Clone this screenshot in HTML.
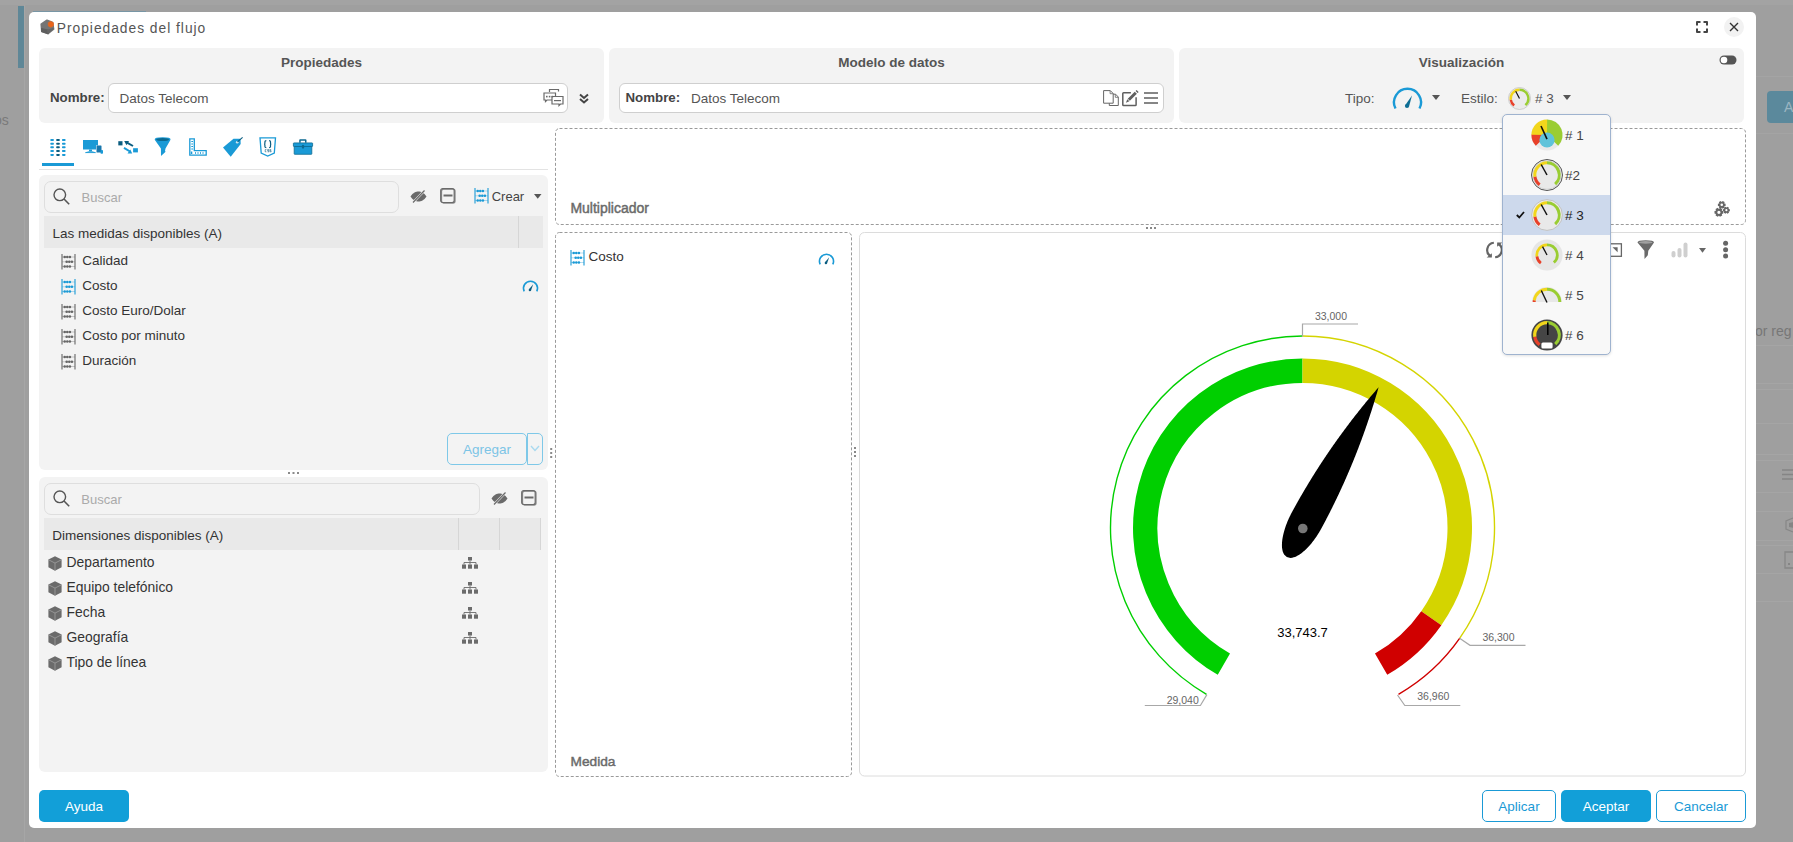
<!DOCTYPE html>
<html><head><meta charset="utf-8">
<style>
*{box-sizing:border-box;margin:0;padding:0}
html,body{width:1793px;height:842px;overflow:hidden;background:#9f9f9f;font-family:"Liberation Sans",sans-serif;font-size:13.5px;color:#333}
.a{position:absolute}
.t{position:absolute;white-space:nowrap;line-height:1}
.dlg{position:absolute;left:29px;top:12px;width:1727px;height:816px;background:#fff;border-radius:5px}
.pnl{position:absolute;background:#f3f3f3;border-radius:6px}
.inp{position:absolute;background:#fff;border:1px solid #cfcfcf;border-radius:6px}
.sbox{position:absolute;background:#f3f3f3;border:1px solid #dedede;border-radius:7px}
.hdr{position:absolute;background:#e9e9e9}
.btn{position:absolute;border-radius:5px;text-align:center;font-size:13.5px}
svg{position:absolute;overflow:visible}
</style></head>
<body>
<!-- background app remnants -->
<div class="a" style="left:0;top:0;width:1793px;height:5px;background:#a3a3a3"></div>
<div class="a" style="left:18px;top:6px;width:6px;height:62px;background:#5f8797"></div>
<div class="a" style="left:24px;top:5px;width:1px;height:837px;background:#a6a6a6"></div>
<div class="t" style="left:-6px;top:113px;color:#7a7a7a;font-size:14px">os</div>
<div class="a" style="left:1767px;top:91px;width:40px;height:32px;background:#5b899c;border-radius:4px"></div>
<div class="t" style="left:1784px;top:100px;color:#9cb6c2;font-size:14px">A</div>
<div class="t" style="left:1755px;top:324px;color:#777;font-size:14px">or reg</div>

<div class="a" style="left:1756px;top:76px;width:37px;height:1px;background:#a4a4a4"></div>
<div class="a" style="left:1756px;top:133px;width:37px;height:1px;background:#a4a4a4"></div>
<div class="a" style="left:1756px;top:345px;width:37px;height:1px;background:#a5a5a5"></div>
<div class="a" style="left:1756px;top:383px;width:37px;height:1px;background:#a5a5a5"></div>
<div class="a" style="left:1756px;top:389px;width:37px;height:1px;background:#a5a5a5"></div>
<div class="a" style="left:1756px;top:423px;width:37px;height:1px;background:#a5a5a5"></div>
<div class="a" style="left:1756px;top:454px;width:37px;height:1px;background:#a5a5a5"></div>
<div class="a" style="left:1756px;top:460px;width:37px;height:1px;background:#a5a5a5"></div>
<div class="a" style="left:1756px;top:492px;width:37px;height:1px;background:#a5a5a5"></div>
<div class="a" style="left:1756px;top:511px;width:37px;height:1px;background:#a5a5a5"></div>
<div class="a" style="left:1756px;top:540px;width:37px;height:1px;background:#a5a5a5"></div>
<div class="a" style="left:1756px;top:545px;width:37px;height:1px;background:#a5a5a5"></div>
<div class="a" style="left:1756px;top:573px;width:37px;height:1px;background:#a5a5a5"></div>
<div class="a" style="left:1756px;top:601px;width:37px;height:1px;background:#a5a5a5"></div>
<svg style="left:1782px;top:469px" width="11" height="11" viewBox="0 0 11 11"><path d="M0 1H11M0 5.5H11M0 10H11" stroke="#858585" stroke-width="1.3"/></svg>
<svg style="left:1784px;top:517px" width="10" height="16" viewBox="0 0 10 16"><path d="M9 1L2 4V12L9 15" fill="none" stroke="#878787" stroke-width="1.2"/><path d="M5 6L10 5V11L5 10Z" fill="#858585"/></svg>
<svg style="left:1784px;top:551px" width="10" height="18" viewBox="0 0 10 18"><path d="M10 1H1V17H10" fill="none" stroke="#878787" stroke-width="1.3"/><rect x="4" y="12" width="2" height="2" fill="#858585"/></svg>
<div class="a" style="left:33px;top:11px;width:113px;height:1px;background:#7896a5"></div>
<div class="dlg"></div>

<!-- title -->
<svg style="left:40px;top:19px" width="15" height="16" viewBox="0 0 15 16">
 <path d="M7 1.2L12.6 3.6L13.6 10.2L8 14.6L1.8 12.4L1.2 5.2Z" fill="#757575" stroke="#757575" stroke-width="1.6" stroke-linejoin="round"/>
 <path d="M1.6 9.5L7.6 11L8 14.6L1.8 12.4Z" fill="#5f5f5f" stroke="#5f5f5f" stroke-width="1.2" stroke-linejoin="round"/>
 <path d="M7.6 11L13.4 9.6L8 14.6Z" fill="#666" stroke="#666" stroke-width="1" stroke-linejoin="round"/>
 <path d="M10.6 2.4L13.3 3.7L13.4 6.8L10.9 8.2L8.4 6.9L8.3 3.8Z" fill="#e8641b" stroke="#e8641b" stroke-width="0.8" stroke-linejoin="round"/>
</svg>
<div class="t" style="left:56.8px;top:22px;font-size:13.8px;letter-spacing:0.98px;color:#555">Propiedades del flujo</div>


<!-- window controls -->
<svg style="left:1696px;top:21px" width="12" height="12" viewBox="0 0 12 12">
 <path d="M1 4.5V1H4.5M7.5 1H11V4.5M11 7.5V11H7.5M4.5 11H1V7.5" fill="none" stroke="#454545" stroke-width="2" stroke-linejoin="round"/>
</svg>
<div class="a" style="left:1724px;top:17px;width:20px;height:20px;border-radius:50%;background:#f2f2f2"></div>
<svg style="left:1730px;top:23px" width="8" height="8" viewBox="0 0 8 8">
 <path d="M0 0L8 8M8 0L0 8" stroke="#333" stroke-width="1.4"/>
</svg>

<!-- top panels -->
<div class="pnl" style="left:39px;top:48px;width:565px;height:75px"></div>
<div class="pnl" style="left:609px;top:48px;width:565px;height:75px"></div>
<div class="pnl" style="left:1179px;top:48px;width:565px;height:75px"></div>
<div class="t" style="left:39px;width:565px;text-align:center;top:55.6px;font-weight:bold;color:#555">Propiedades</div>
<div class="t" style="left:609px;width:565px;text-align:center;top:55.6px;font-weight:bold;color:#555">Modelo de datos</div>
<div class="t" style="left:1179px;width:565px;text-align:center;top:55.6px;font-weight:bold;color:#555">Visualización</div>

<div class="t" style="left:50px;top:90.7px;font-size:13.3px;font-weight:bold;color:#444">Nombre:</div>
<div class="inp" style="left:108px;top:83px;width:460px;height:30px"></div>
<div class="t" style="left:119.5px;top:91.6px;color:#555">Datos Telecom</div>
<svg style="left:543px;top:88px" width="21" height="19" viewBox="0 0 21 19">
 <g fill="none" stroke="#6a6a6a" stroke-width="1.2">
  <path d="M6.5 4V1.5H15.5V3.5"/>
  <path d="M1 5H12.5V12H4L2.5 13.5V12H1Z"/>
  <path d="M9 8.5H20V16H17.5L16 17.5V16H9Z" fill="#fff"/>
 </g>
 <g fill="#6a6a6a"><rect x="3" y="7.8" width="1.6" height="1.6"/><rect x="5.8" y="7.8" width="1.6" height="1.6"/><rect x="8.6" y="7.8" width="1.6" height="1.6"/><rect x="11" y="12" width="7" height="1.2"/></g>
</svg>
<svg style="left:579px;top:93px" width="10" height="11" viewBox="0 0 10 11">
 <path d="M1 1.5L5 5L9 1.5M1 6L5 9.5L9 6" fill="none" stroke="#444" stroke-width="2"/>
</svg>

<div class="inp" style="left:619px;top:83px;width:545px;height:30px"></div>
<div class="t" style="left:625.5px;top:90.5px;font-size:13.3px;font-weight:bold;color:#444">Nombre:</div>
<div class="t" style="left:691px;top:91.6px;color:#555">Datos Telecom</div>
<svg style="left:1103px;top:90px" width="17" height="17" viewBox="0 0 17 17">
 <path d="M6.3 4.2H12.6L15.3 7V15.5H6.3Z" fill="#fff" stroke="#666" stroke-width="1"/>
 <path d="M12.3 4.4V7.3H15.1" fill="none" stroke="#666" stroke-width="0.8"/>
 <path d="M0.6 0.6H7.3L10.2 3.5V13.2H0.6Z" fill="#fff" stroke="#666" stroke-width="1"/>
 <path d="M7.1 0.8V3.7H10" fill="none" stroke="#666" stroke-width="0.8"/>
</svg>
<svg style="left:1122px;top:89px" width="17" height="18" viewBox="0 0 17 18">
 <path d="M8.9 3.7H1.6Q0.8 3.7 0.8 4.5V15.8Q0.8 16.6 1.6 16.6H13.3Q14.1 16.6 14.1 15.8V8.2" fill="none" stroke="#5f5f5f" stroke-width="1.5"/>
 <path d="M5.74 9.74L12.74 2.74L14.86 4.86L7.86 11.86Z" fill="#5f5f5f"/>
 <path d="M5.3 10.2L7.4 12.3L3.9 13.7Z" fill="#5f5f5f"/>
 <path d="M13.54 1.94L14.54 0.94L16.66 3.06L15.66 4.06Z" fill="#5f5f5f"/>
</svg>
<svg style="left:1144px;top:91px" width="15" height="13" viewBox="0 0 15 13">
 <path d="M0 2H14M0 7H14M0 12H14" stroke="#5f5f5f" stroke-width="1.7"/>
</svg>

<!-- visualizacion -->
<svg style="left:1719px;top:55px" width="18" height="10" viewBox="0 0 18 10">
 <rect x="0.5" y="0.5" width="17" height="9" rx="4.5" fill="#555"/>
 <circle cx="5" cy="5" r="3.3" fill="#fff"/>
</svg>
<div class="t" style="left:1345px;top:91.6px;color:#555">Tipo:</div>
<svg style="left:1392px;top:85px" width="31" height="25" viewBox="0 0 31 25">
 <path d="M3.5 23.5A13.5 13.5 0 1 1 27.5 23.5" fill="none" stroke="#1a9ad6" stroke-width="2.4"/>
 <path d="M13 20.5L20 10.5L17 21.5Z" fill="#0e6e94"/>
 <circle cx="15" cy="21" r="2.1" fill="#0e6e94"/>
</svg>
<svg style="left:1432px;top:95px" width="8" height="6" viewBox="0 0 8 6"><path d="M0 0H8L4 5Z" fill="#555"/></svg>
<div class="t" style="left:1461px;top:91.6px;color:#555">Estilo:</div>
<svg style="left:1508px;top:87px" width="23" height="23" viewBox="-11.5 -11.5 23 23"><circle r="11" fill="#ebebeb" stroke="#c4c4c4" stroke-width="0.8"/><path d="M-5.30 7.03A8.8 8.8 0 0 1 -8.73 1.07" fill="none" stroke="#e8412a" stroke-width="2.4"/><path d="M-8.71 1.22A8.8 8.8 0 0 1 0.08 -8.80" fill="none" stroke="#f2d61c" stroke-width="2.4"/><path d="M0.00 -8.80A8.8 8.8 0 0 1 5.89 6.54" fill="none" stroke="#9acd32" stroke-width="2.4"/><path d="M0 0L-3.8 -7.3" stroke="#111" stroke-width="1.2"/></svg>
<div class="t" style="left:1535px;top:91.6px;color:#555">#&nbsp;3</div>
<svg style="left:1563px;top:95px" width="8" height="6" viewBox="0 0 8 6"><path d="M0 0H8L4 5Z" fill="#555"/></svg>


<!-- tabs -->
<svg style="left:50px;top:138px" width="16" height="18" viewBox="0 0 16 18">
 <g fill="#1a9ad6"><rect x="0.3" y="1" width="3.6" height="2" rx="0.8"/><rect x="0.3" y="4.7" width="3.6" height="2" rx="0.8"/><rect x="0.3" y="8.3" width="3.6" height="2" rx="0.8"/><rect x="0.3" y="12" width="3.6" height="2" rx="0.8"/><rect x="0.3" y="15.9" width="3.6" height="2" rx="0.8"/>
 <rect x="12" y="1" width="3.6" height="2" rx="0.8"/><rect x="12" y="4.7" width="3.6" height="2" rx="0.8"/><rect x="12" y="8.3" width="3.6" height="2" rx="0.8"/><rect x="12" y="12" width="3.6" height="2" rx="0.8"/><rect x="12" y="15.9" width="3.6" height="2" rx="0.8"/></g>
 <g fill="#0b5d80"><rect x="6.2" y="1" width="3.6" height="2" rx="0.8"/><rect x="6.2" y="4.7" width="3.6" height="2" rx="0.8"/><rect x="6.2" y="8.3" width="3.6" height="2" rx="0.8"/><rect x="6.2" y="12" width="3.6" height="2" rx="0.8"/><rect x="6.2" y="15.9" width="3.6" height="2" rx="0.8"/></g>
</svg>
<div class="a" style="left:42px;top:163px;width:32px;height:3px;background:#1a9ad6"></div>
<svg style="left:83px;top:140px" width="21" height="14" viewBox="0 0 21 14">
 <rect x="0" y="0" width="15" height="9.5" fill="#1a9ad6"/>
 <path d="M6 9.5H9V11H6Z" fill="#1a9ad6"/>
 <path d="M2.5 12.6Q7.5 10.5 12.5 12.6Z" fill="#1a9ad6" stroke="#1a9ad6" stroke-width="0.8"/>
 <rect x="13" y="5.4" width="5.3" height="7.2" fill="#fff"/>
 <rect x="13.5" y="5.4" width="5" height="7.2" rx="0.6" fill="#1777ad"/>
 <rect x="17.5" y="10" width="2.5" height="3.8" rx="0.8" fill="#1a9ad6"/>
</svg>
<svg style="left:118px;top:140px" width="21" height="15" viewBox="0 0 21 15">
 <rect x="0.3" y="1.2" width="4.2" height="4.2" fill="#0b5d80"/>
 <rect x="15.1" y="8.2" width="4.8" height="4.2" fill="#1a9ad6"/>
 <path d="M15 6L8.5 2.4" stroke="#0b5d80" stroke-width="2"/><path d="M6.2 1L11 0.9L8.5 5.2Z" fill="#0b5d80"/>
 <path d="M6 7.8L12 11.5" stroke="#1a9ad6" stroke-width="2"/><path d="M14.2 13.6L9.5 13.6L12.3 9.5Z" fill="#1a9ad6"/>
</svg>
<svg style="left:154px;top:137px" width="18" height="20" viewBox="0 0 18 20">
 <path d="M0.7 2.7Q0.3 0.3 8.7 0.3Q17 0.3 16.5 2.7L11.5 11.5L11 14L11.6 14.8L7 19L6.9 11.5Z" fill="#1a9ad6"/>
 <ellipse cx="8.6" cy="2.6" rx="6.5" ry="1.5" fill="#0d6a91"/>
</svg>
<svg style="left:189px;top:138px" width="18" height="18" viewBox="0 0 18 18">
 <path d="M0.8 0.8H5.3V12.6H17.2V17.2H0.8Z" fill="none" stroke="#1a9ad6" stroke-width="1.3"/>
 <g stroke="#1a9ad6" stroke-width="1"><path d="M2.3 3.5H4M2.3 6H4M2.3 8.5H4M2.3 11H4M6.5 14.2V15.8M9 14.2V15.8M11.5 14.2V15.8M14 14.2V15.8"/></g>
 <rect x="1.8" y="13.5" width="1.5" height="2.5" fill="#1a9ad6"/>
</svg>
<svg style="left:223px;top:137px" width="21" height="20" viewBox="0 0 21 20">
 <path d="M0 10.5L10.5 1.8H17.5L17.7 7L7.7 19.8Z" fill="#1a9ad6"/>
 <circle cx="14.2" cy="5.2" r="1.3" fill="#cfe6f1"/>
 <path d="M14.5 4.8L19.6 0.3" stroke="#0b5d80" stroke-width="1.1"/>
</svg>
<svg style="left:259px;top:137px" width="18" height="20" viewBox="0 0 18 20">
 <path d="M1 0.9H16.5L15.3 16L8.7 19L2.2 16Z" fill="#fff" stroke="#1a9ad6" stroke-width="1.3"/>
 <path d="M7.3 3.6Q5.9 3.6 5.9 4.8V6.2Q5.9 7 5.2 7.1Q5.9 7.2 5.9 8V9.4Q5.9 10.6 7.3 10.6" fill="none" stroke="#0b5d80" stroke-width="1.2"/>
 <path d="M10.1 3.6Q11.5 3.6 11.5 4.8V6.2Q11.5 7 12.2 7.1Q11.5 7.2 11.5 8V9.4Q11.5 10.6 10.1 10.6" fill="none" stroke="#0b5d80" stroke-width="1.2"/>
 <path d="M7.4 12.6H6.2V14.8H7.4M10.2 12.6H8.6V13.7H10V14.8H8.6M12.2 12.6H10.9V13.7H12.1V14.8H10.8" fill="none" stroke="#0b5d80" stroke-width="0.6"/>
</svg>
<svg style="left:293px;top:139px" width="20" height="16" viewBox="0 0 20 16">
 <path d="M6.2 3.8V1.2Q6.2 0.3 7.1 0.3H12.5Q13.5 0.3 13.5 1.2V3.8H12V1.8H7.7V3.8Z" fill="#0d6a91"/>
 <rect x="0.4" y="3.9" width="19.2" height="3.6" rx="0.5" fill="#1a9ad6" stroke="#0d6a91" stroke-width="0.8"/>
 <rect x="1.2" y="7.5" width="17.6" height="7.8" rx="0.5" fill="#1a9ad6" stroke="#0d6a91" stroke-width="0.8"/>
 <path d="M8.9 6.3Q10 5.1 11.1 6.3V8.8L10 9.9L8.9 8.8Z" fill="#0d6a91"/>
</svg>
<div class="a" style="left:39px;top:169px;width:509px;height:1px;background:#e3e3e3"></div>

<!-- measures panel -->
<div class="pnl" style="left:39px;top:175px;width:509px;height:295px;border-radius:6px"></div>
<div class="sbox" style="left:44px;top:181px;width:355px;height:32px"></div>
<svg style="left:53px;top:188px" width="17" height="17" viewBox="0 0 17 17">
 <circle cx="6.8" cy="6.8" r="5.8" fill="none" stroke="#555" stroke-width="1.4"/>
 <path d="M11 11L16.2 16.2" stroke="#555" stroke-width="1.6"/>
</svg>
<div class="t" style="left:81.5px;top:191px;font-size:13px;color:#aaa">Buscar</div>
<svg style="left:410px;top:189.5px" width="17" height="13" viewBox="0 0 17 13">
 <path d="M0.5 6.5C3 2.5 6 1.5 8.5 1.5C11 1.5 14 2.5 16.5 6.5C14 10.5 11 11.5 8.5 11.5C6 11.5 3 10.5 0.5 6.5Z" fill="#6a6a6a"/>
 <path d="M14.5 0.5L3 12.5" stroke="#f3f3f3" stroke-width="2.4"/>
 <path d="M14.5 0.5L3 12.5" stroke="#6a6a6a" stroke-width="1.2"/>
</svg>
<svg style="left:440px;top:188px" width="16" height="16" viewBox="0 0 16 16">
 <rect x="1.5" y="1.2" width="13.5" height="13.8" rx="2" fill="none" stroke="#8a8a8a" stroke-width="1.3"/>
 <rect x="0.7" y="0.7" width="13.5" height="13.8" rx="2" fill="none" stroke="#6a6a6a" stroke-width="1.2"/>
 <path d="M3.5 7.5H12.5" stroke="#6a6a6a" stroke-width="2"/>
</svg>
<svg style="left:474px;top:188px" width="15" height="16" viewBox="0 0 15 16">
 <path d="M1 0V15.5M14 0V15.5" stroke="#1a9ad6" stroke-width="1.1"/>
 <path d="M1 3H14M1 7.8H14M1 12.5H14" stroke="#1a9ad6" stroke-width="0.6" opacity="0.55"/>
 <g fill="#1a9ad6"><circle cx="3.7" cy="3" r="1.3"/><circle cx="6.3" cy="3" r="1.3"/><circle cx="8.9" cy="3" r="1.3"/>
 <circle cx="5.7" cy="7.8" r="1.3"/><circle cx="8.3" cy="7.8" r="1.3"/><circle cx="10.9" cy="7.8" r="1.3"/>
 <circle cx="3.7" cy="12.5" r="1.3"/><circle cx="6.3" cy="12.5" r="1.3"/><circle cx="8.9" cy="12.5" r="1.3"/></g>
</svg>
<div class="t" style="left:491.7px;top:190px;font-size:13px;color:#444">Crear</div>
<svg style="left:534px;top:194px" width="8" height="5" viewBox="0 0 8 5"><path d="M0 0H7.5L3.75 4.8Z" fill="#555"/></svg>
<div class="hdr" style="left:44px;top:216px;width:499px;height:32px"></div>
<div class="a" style="left:518px;top:216px;width:1px;height:32px;background:#d6d6d6"></div>
<div class="t" style="left:52.4px;top:226.8px;color:#333">Las medidas disponibles (A)</div>
<svg style="left:61px;top:254px" width="15" height="16" viewBox="0 0 15 16">
 <path d="M1 0V15.5M14 0V15.5" stroke="#666" stroke-width="1.1"/>
 <path d="M1 3H14M1 7.8H14M1 12.5H14" stroke="#666" stroke-width="0.6" opacity="0.55"/>
 <g fill="#666"><circle cx="3.7" cy="3" r="1.3"/><circle cx="6.3" cy="3" r="1.3"/><circle cx="8.9" cy="3" r="1.3"/>
 <circle cx="5.7" cy="7.8" r="1.3"/><circle cx="8.3" cy="7.8" r="1.3"/><circle cx="10.9" cy="7.8" r="1.3"/>
 <circle cx="3.7" cy="12.5" r="1.3"/><circle cx="6.3" cy="12.5" r="1.3"/><circle cx="8.9" cy="12.5" r="1.3"/></g>
</svg>
<div class="t" style="left:82.2px;top:254px">Calidad</div>
<svg style="left:61px;top:279px" width="15" height="16" viewBox="0 0 15 16">
 <path d="M1 0V15.5M14 0V15.5" stroke="#1a9ad6" stroke-width="1.1"/>
 <path d="M1 3H14M1 7.8H14M1 12.5H14" stroke="#1a9ad6" stroke-width="0.6" opacity="0.55"/>
 <g fill="#1a9ad6"><circle cx="3.7" cy="3" r="1.3"/><circle cx="6.3" cy="3" r="1.3"/><circle cx="8.9" cy="3" r="1.3"/>
 <circle cx="5.7" cy="7.8" r="1.3"/><circle cx="8.3" cy="7.8" r="1.3"/><circle cx="10.9" cy="7.8" r="1.3"/>
 <circle cx="3.7" cy="12.5" r="1.3"/><circle cx="6.3" cy="12.5" r="1.3"/><circle cx="8.9" cy="12.5" r="1.3"/></g>
</svg>
<div class="t" style="left:82.2px;top:279px">Costo</div>
<svg style="left:61px;top:304px" width="15" height="16" viewBox="0 0 15 16">
 <path d="M1 0V15.5M14 0V15.5" stroke="#666" stroke-width="1.1"/>
 <path d="M1 3H14M1 7.8H14M1 12.5H14" stroke="#666" stroke-width="0.6" opacity="0.55"/>
 <g fill="#666"><circle cx="3.7" cy="3" r="1.3"/><circle cx="6.3" cy="3" r="1.3"/><circle cx="8.9" cy="3" r="1.3"/>
 <circle cx="5.7" cy="7.8" r="1.3"/><circle cx="8.3" cy="7.8" r="1.3"/><circle cx="10.9" cy="7.8" r="1.3"/>
 <circle cx="3.7" cy="12.5" r="1.3"/><circle cx="6.3" cy="12.5" r="1.3"/><circle cx="8.9" cy="12.5" r="1.3"/></g>
</svg>
<div class="t" style="left:82.2px;top:304px">Costo Euro/Dolar</div>
<svg style="left:61px;top:329px" width="15" height="16" viewBox="0 0 15 16">
 <path d="M1 0V15.5M14 0V15.5" stroke="#666" stroke-width="1.1"/>
 <path d="M1 3H14M1 7.8H14M1 12.5H14" stroke="#666" stroke-width="0.6" opacity="0.55"/>
 <g fill="#666"><circle cx="3.7" cy="3" r="1.3"/><circle cx="6.3" cy="3" r="1.3"/><circle cx="8.9" cy="3" r="1.3"/>
 <circle cx="5.7" cy="7.8" r="1.3"/><circle cx="8.3" cy="7.8" r="1.3"/><circle cx="10.9" cy="7.8" r="1.3"/>
 <circle cx="3.7" cy="12.5" r="1.3"/><circle cx="6.3" cy="12.5" r="1.3"/><circle cx="8.9" cy="12.5" r="1.3"/></g>
</svg>
<div class="t" style="left:82.2px;top:329px">Costo por minuto</div>
<svg style="left:61px;top:354px" width="15" height="16" viewBox="0 0 15 16">
 <path d="M1 0V15.5M14 0V15.5" stroke="#666" stroke-width="1.1"/>
 <path d="M1 3H14M1 7.8H14M1 12.5H14" stroke="#666" stroke-width="0.6" opacity="0.55"/>
 <g fill="#666"><circle cx="3.7" cy="3" r="1.3"/><circle cx="6.3" cy="3" r="1.3"/><circle cx="8.9" cy="3" r="1.3"/>
 <circle cx="5.7" cy="7.8" r="1.3"/><circle cx="8.3" cy="7.8" r="1.3"/><circle cx="10.9" cy="7.8" r="1.3"/>
 <circle cx="3.7" cy="12.5" r="1.3"/><circle cx="6.3" cy="12.5" r="1.3"/><circle cx="8.9" cy="12.5" r="1.3"/></g>
</svg>
<div class="t" style="left:82.2px;top:354px">Duración</div>
<svg style="left:522px;top:279px" width="17" height="13" viewBox="0 0 17 13">
 <path d="M2.2 12.3A7 7 0 1 1 14.8 12.3" fill="none" stroke="#1a9ad6" stroke-width="1.6"/>
 <path d="M6.8 10.5L11.2 5.2L9 11.5Z" fill="#0b5d80"/><circle cx="7.9" cy="11" r="1.2" fill="#0b5d80"/>
</svg>
<div class="a" style="left:447px;top:433px;width:80px;height:32px;border:1.5px solid #7ec8e8;border-radius:5px"></div>
<div class="t" style="left:447px;width:80px;text-align:center;top:442.6px;color:#7cc4e6">Agregar</div>
<div class="a" style="left:527px;top:433px;width:16px;height:32px;border:1.5px solid #7ec8e8;border-radius:0 5px 5px 0"></div>
<svg style="left:530px;top:445px" width="10" height="7" viewBox="0 0 10 7"><path d="M1 1L5 5.5L9 1" fill="none" stroke="#a9d9ef" stroke-width="1.4"/></svg>
<svg style="left:550px;top:448px" width="3" height="12" viewBox="0 0 3 12"><g fill="#8a8a8a"><rect x="0.2" y="0" width="2" height="2"/><rect x="0.2" y="4" width="2" height="2"/><rect x="0.2" y="8" width="2" height="2"/></g></svg>
<svg style="left:288px;top:472px" width="12" height="3" viewBox="0 0 12 3"><g fill="#8a8a8a"><rect x="0" y="0" width="2" height="2"/><rect x="4.5" y="0" width="2" height="2"/><rect x="9" y="0" width="2" height="2"/></g></svg>

<!-- dimensions panel -->
<div class="pnl" style="left:39px;top:477px;width:509px;height:295px;border-radius:6px"></div>
<div class="sbox" style="left:44px;top:483px;width:436px;height:32px"></div>
<svg style="left:53px;top:490px" width="17" height="17" viewBox="0 0 17 17">
 <circle cx="6.8" cy="6.8" r="5.8" fill="none" stroke="#555" stroke-width="1.4"/>
 <path d="M11 11L16.2 16.2" stroke="#555" stroke-width="1.6"/>
</svg>
<div class="t" style="left:81.3px;top:493px;font-size:13px;color:#aaa">Buscar</div>
<svg style="left:491px;top:491.5px" width="17" height="13" viewBox="0 0 17 13">
 <path d="M0.5 6.5C3 2.5 6 1.5 8.5 1.5C11 1.5 14 2.5 16.5 6.5C14 10.5 11 11.5 8.5 11.5C6 11.5 3 10.5 0.5 6.5Z" fill="#6a6a6a"/>
 <path d="M14.5 0.5L3 12.5" stroke="#f3f3f3" stroke-width="2.4"/>
 <path d="M14.5 0.5L3 12.5" stroke="#6a6a6a" stroke-width="1.2"/>
</svg>
<svg style="left:521px;top:490px" width="16" height="16" viewBox="0 0 16 16">
 <rect x="1.5" y="1.2" width="13.5" height="13.8" rx="2" fill="none" stroke="#8a8a8a" stroke-width="1.3"/>
 <rect x="0.7" y="0.7" width="13.5" height="13.8" rx="2" fill="none" stroke="#6a6a6a" stroke-width="1.2"/>
 <path d="M3.5 7.5H12.5" stroke="#6a6a6a" stroke-width="2"/>
</svg>
<div class="hdr" style="left:44px;top:518px;width:497px;height:32px"></div>
<div class="a" style="left:458px;top:518px;width:1px;height:32px;background:#d6d6d6"></div>
<div class="a" style="left:499px;top:518px;width:1px;height:32px;background:#d6d6d6"></div>
<div class="a" style="left:540px;top:518px;width:1px;height:32px;background:#d6d6d6"></div>
<div class="t" style="left:52.2px;top:529.2px">Dimensiones disponibles (A)</div>
<svg style="left:48px;top:556px" width="14" height="15" viewBox="0 0 14 15">
 <path d="M7 0.3L13.6 3.6V11.2L7 14.7L0.4 11.2V3.6Z" fill="#6b6b6b"/>
 <path d="M0.8 3.9L7 7.1L13.2 3.9" fill="none" stroke="#9a9a9a" stroke-width="0.9"/>
 <path d="M7 7.1V14.5" stroke="#9a9a9a" stroke-width="0.9"/>
</svg><div class="t" style="left:66.5px;top:556px;font-size:13.9px">Departamento</div>
<svg style="left:48px;top:581px" width="14" height="15" viewBox="0 0 14 15">
 <path d="M7 0.3L13.6 3.6V11.2L7 14.7L0.4 11.2V3.6Z" fill="#6b6b6b"/>
 <path d="M0.8 3.9L7 7.1L13.2 3.9" fill="none" stroke="#9a9a9a" stroke-width="0.9"/>
 <path d="M7 7.1V14.5" stroke="#9a9a9a" stroke-width="0.9"/>
</svg><div class="t" style="left:66.5px;top:581px;font-size:13.9px">Equipo telefónico</div>
<svg style="left:48px;top:606px" width="14" height="15" viewBox="0 0 14 15">
 <path d="M7 0.3L13.6 3.6V11.2L7 14.7L0.4 11.2V3.6Z" fill="#6b6b6b"/>
 <path d="M0.8 3.9L7 7.1L13.2 3.9" fill="none" stroke="#9a9a9a" stroke-width="0.9"/>
 <path d="M7 7.1V14.5" stroke="#9a9a9a" stroke-width="0.9"/>
</svg><div class="t" style="left:66.5px;top:606px;font-size:13.9px">Fecha</div>
<svg style="left:48px;top:631px" width="14" height="15" viewBox="0 0 14 15">
 <path d="M7 0.3L13.6 3.6V11.2L7 14.7L0.4 11.2V3.6Z" fill="#6b6b6b"/>
 <path d="M0.8 3.9L7 7.1L13.2 3.9" fill="none" stroke="#9a9a9a" stroke-width="0.9"/>
 <path d="M7 7.1V14.5" stroke="#9a9a9a" stroke-width="0.9"/>
</svg><div class="t" style="left:66.5px;top:631px;font-size:13.9px">Geografía</div>
<svg style="left:48px;top:656px" width="14" height="15" viewBox="0 0 14 15">
 <path d="M7 0.3L13.6 3.6V11.2L7 14.7L0.4 11.2V3.6Z" fill="#6b6b6b"/>
 <path d="M0.8 3.9L7 7.1L13.2 3.9" fill="none" stroke="#9a9a9a" stroke-width="0.9"/>
 <path d="M7 7.1V14.5" stroke="#9a9a9a" stroke-width="0.9"/>
</svg><div class="t" style="left:66.5px;top:656px;font-size:13.9px">Tipo de línea</div>
<svg style="left:462px;top:557px" width="16" height="12" viewBox="0 0 16 12">
 <g fill="#6b6b6b"><rect x="6" y="0" width="4" height="3.5"/><rect x="0" y="7.5" width="4" height="4.2"/><rect x="6" y="7.5" width="4" height="4.2"/><rect x="12" y="7.5" width="4" height="4.2"/></g>
 <path d="M8 3.5V7.5M2 7.5V5.5H14V7.5" fill="none" stroke="#6b6b6b" stroke-width="0.9"/>
</svg> <svg style="left:462px;top:582px" width="16" height="12" viewBox="0 0 16 12">
 <g fill="#6b6b6b"><rect x="6" y="0" width="4" height="3.5"/><rect x="0" y="7.5" width="4" height="4.2"/><rect x="6" y="7.5" width="4" height="4.2"/><rect x="12" y="7.5" width="4" height="4.2"/></g>
 <path d="M8 3.5V7.5M2 7.5V5.5H14V7.5" fill="none" stroke="#6b6b6b" stroke-width="0.9"/>
</svg> <svg style="left:462px;top:607px" width="16" height="12" viewBox="0 0 16 12">
 <g fill="#6b6b6b"><rect x="6" y="0" width="4" height="3.5"/><rect x="0" y="7.5" width="4" height="4.2"/><rect x="6" y="7.5" width="4" height="4.2"/><rect x="12" y="7.5" width="4" height="4.2"/></g>
 <path d="M8 3.5V7.5M2 7.5V5.5H14V7.5" fill="none" stroke="#6b6b6b" stroke-width="0.9"/>
</svg> <svg style="left:462px;top:632px" width="16" height="12" viewBox="0 0 16 12">
 <g fill="#6b6b6b"><rect x="6" y="0" width="4" height="3.5"/><rect x="0" y="7.5" width="4" height="4.2"/><rect x="6" y="7.5" width="4" height="4.2"/><rect x="12" y="7.5" width="4" height="4.2"/></g>
 <path d="M8 3.5V7.5M2 7.5V5.5H14V7.5" fill="none" stroke="#6b6b6b" stroke-width="0.9"/>
</svg>

<!-- bottom buttons -->
<div class="btn" style="left:39px;top:790px;width:90px;height:32px;background:#129fd8"></div>
<div class="t" style="left:39px;width:90px;text-align:center;top:800.2px;color:#fff">Ayuda</div>


<!-- drop zones -->
<svg style="left:0;top:0" width="1793" height="842">
 <rect x="555.5" y="128.5" width="1190" height="96" rx="4" fill="none" stroke="#9a9a9a" stroke-width="1" stroke-dasharray="3 2"/>
 <rect x="555.5" y="232.5" width="296" height="544" rx="4" fill="none" stroke="#9a9a9a" stroke-width="1" stroke-dasharray="3 2"/>
 <rect x="859.5" y="232.5" width="886" height="543.5" rx="5" fill="#fff" stroke="#dcdcdc" stroke-width="1"/>
 <g fill="#888"><rect x="1146" y="227" width="2" height="2"/><rect x="1150" y="227" width="2" height="2"/><rect x="1154" y="227" width="2" height="2"/>
 <rect x="854" y="447" width="2" height="2"/><rect x="854" y="451" width="2" height="2"/><rect x="854" y="455" width="2" height="2"/></g>
 <!-- gauge -->
 <path d="M1223.88 664.18A157.25 157.25 0 0 1 1302.50 370.75" fill="none" stroke="#00cf00" stroke-width="24.5"/>
 <path d="M1302.50 370.75A157.25 157.25 0 0 1 1431.31 618.19" fill="none" stroke="#d4d400" stroke-width="24.5"/>
 <path d="M1431.31 618.19A157.25 157.25 0 0 1 1381.12 664.18" fill="none" stroke="#d00000" stroke-width="24.5"/>
 <path d="M1206.50 694.28A192 192 0 0 1 1302.50 336.00" fill="none" stroke="#00cf00" stroke-width="1.4"/>
 <path d="M1302.50 336.00A192 192 0 0 1 1459.78 638.13" fill="none" stroke="#d4d400" stroke-width="1.4"/>
 <path d="M1459.78 638.13A192 192 0 0 1 1398.50 694.28" fill="none" stroke="#d00000" stroke-width="1.4"/>
 <g fill="none" stroke="#a8a8a8" stroke-width="1.2">
  <path d="M1302.5 336.5V324H1358"/>
  <path d="M1459.6 638.2L1470 645.3H1525.5"/>
  <path d="M1397.5 695L1404.8 705.5H1460.3"/>
  <path d="M1206.9 694.6L1200.4 705.5H1144.8"/>
 </g>
 <g font-family="Liberation Sans" font-size="10.5" fill="#666">
  <text x="1331" y="320" text-anchor="middle">33,000</text>
  <text x="1498.5" y="640.6" text-anchor="middle">36,300</text>
  <text x="1433.3" y="700.3" text-anchor="middle">36,960</text>
  <text x="1182.7" y="703.8" text-anchor="middle">29,040</text>
 </g>
 <text x="1302.5" y="636.8" text-anchor="middle" font-family="Liberation Sans" font-size="13" fill="#000">33,743.7</text>
 <g transform="translate(1302.5 528.0) rotate(28.4)"><path d="M0.00 -160.00 L0.22 -159.00 L0.44 -158.00 L0.66 -157.00 L0.88 -156.00 L1.09 -155.00 L1.31 -154.00 L1.52 -153.00 L1.73 -152.00 L1.94 -151.00 L2.15 -150.00 L2.36 -149.00 L2.56 -148.00 L2.77 -147.00 L2.97 -146.00 L3.17 -145.00 L3.37 -144.00 L3.57 -143.00 L3.77 -142.00 L3.96 -141.00 L4.16 -140.00 L4.35 -139.00 L4.54 -138.00 L4.73 -137.00 L4.92 -136.00 L5.10 -135.00 L5.29 -134.00 L5.47 -133.00 L5.65 -132.00 L5.83 -131.00 L6.01 -130.00 L6.19 -129.00 L6.37 -128.00 L6.54 -127.00 L6.71 -126.00 L6.89 -125.00 L7.06 -124.00 L7.22 -123.00 L7.39 -122.00 L7.56 -121.00 L7.72 -120.00 L7.88 -119.00 L8.05 -118.00 L8.21 -117.00 L8.36 -116.00 L8.52 -115.00 L8.68 -114.00 L8.83 -113.00 L8.98 -112.00 L9.13 -111.00 L9.28 -110.00 L9.43 -109.00 L9.58 -108.00 L9.72 -107.00 L9.87 -106.00 L10.01 -105.00 L10.15 -104.00 L10.29 -103.00 L10.43 -102.00 L10.56 -101.00 L10.70 -100.00 L10.83 -99.00 L10.96 -98.00 L11.09 -97.00 L11.22 -96.00 L11.35 -95.00 L11.48 -94.00 L11.60 -93.00 L11.72 -92.00 L11.85 -91.00 L11.97 -90.00 L12.08 -89.00 L12.20 -88.00 L12.32 -87.00 L12.43 -86.00 L12.54 -85.00 L12.66 -84.00 L12.77 -83.00 L12.87 -82.00 L12.98 -81.00 L13.09 -80.00 L13.19 -79.00 L13.29 -78.00 L13.39 -77.00 L13.49 -76.00 L13.59 -75.00 L13.69 -74.00 L13.78 -73.00 L13.88 -72.00 L13.97 -71.00 L14.06 -70.00 L14.15 -69.00 L14.24 -68.00 L14.32 -67.00 L14.41 -66.00 L14.49 -65.00 L14.57 -64.00 L14.65 -63.00 L14.73 -62.00 L14.81 -61.00 L14.88 -60.00 L14.96 -59.00 L15.03 -58.00 L15.10 -57.00 L15.17 -56.00 L15.24 -55.00 L15.31 -54.00 L15.37 -53.00 L15.44 -52.00 L15.50 -51.00 L15.56 -50.00 L15.62 -49.00 L15.68 -48.00 L15.74 -47.00 L15.79 -46.00 L15.85 -45.00 L15.90 -44.00 L15.95 -43.00 L16.00 -42.00 L16.05 -41.00 L16.09 -40.00 L16.14 -39.00 L16.18 -38.00 L16.22 -37.00 L16.26 -36.00 L16.30 -35.00 L16.34 -34.00 L16.38 -33.00 L16.41 -32.00 L16.44 -31.00 L16.48 -30.00 L16.51 -29.00 L16.53 -28.00 L16.56 -27.00 L16.59 -26.00 L16.61 -25.00 L16.63 -24.00 L16.66 -23.00 L16.68 -22.00 L16.69 -21.00 L16.71 -20.00 L16.73 -19.00 L16.74 -18.00 L16.75 -17.00 L16.76 -16.00 L16.77 -15.00 L16.78 -14.00 L16.79 -13.00 L16.79 -12.00 L16.80 -11.00 L16.80 -10.00 L16.80 -9.00 L16.80 -8.00 L16.78 -7.00 L16.76 -6.00 L16.72 -5.00 L16.68 -4.00 L16.63 -3.00 L16.57 -2.00 L16.49 -1.00 L16.41 -0.00 L16.32 1.00 L16.21 2.00 L16.10 3.00 L15.97 4.00 L15.84 5.00 L15.69 6.00 L15.53 7.00 L15.36 8.00 L15.18 9.00 L14.98 10.00 L14.77 11.00 L14.55 12.00 L14.31 13.00 L14.06 14.00 L13.79 15.00 L13.50 16.00 L13.19 17.00 L12.87 18.00 L12.52 19.00 L12.15 20.00 L11.76 21.00 L11.33 22.00 L10.88 23.00 L10.39 24.00 L9.86 25.00 L9.29 26.00 L8.65 27.00 L7.95 28.00 L7.16 29.00 L6.24 30.00 L5.12 31.00 L3.64 32.00 L0.00 33.00 L-0.00 33.00 L-3.64 32.00 L-5.12 31.00 L-6.24 30.00 L-7.16 29.00 L-7.95 28.00 L-8.65 27.00 L-9.29 26.00 L-9.86 25.00 L-10.39 24.00 L-10.88 23.00 L-11.33 22.00 L-11.76 21.00 L-12.15 20.00 L-12.52 19.00 L-12.87 18.00 L-13.19 17.00 L-13.50 16.00 L-13.79 15.00 L-14.06 14.00 L-14.31 13.00 L-14.55 12.00 L-14.77 11.00 L-14.98 10.00 L-15.18 9.00 L-15.36 8.00 L-15.53 7.00 L-15.69 6.00 L-15.84 5.00 L-15.97 4.00 L-16.10 3.00 L-16.21 2.00 L-16.32 1.00 L-16.41 -0.00 L-16.49 -1.00 L-16.57 -2.00 L-16.63 -3.00 L-16.68 -4.00 L-16.72 -5.00 L-16.76 -6.00 L-16.78 -7.00 L-16.80 -8.00 L-16.80 -9.00 L-16.80 -10.00 L-16.80 -11.00 L-16.79 -12.00 L-16.79 -13.00 L-16.78 -14.00 L-16.77 -15.00 L-16.76 -16.00 L-16.75 -17.00 L-16.74 -18.00 L-16.73 -19.00 L-16.71 -20.00 L-16.69 -21.00 L-16.68 -22.00 L-16.66 -23.00 L-16.63 -24.00 L-16.61 -25.00 L-16.59 -26.00 L-16.56 -27.00 L-16.53 -28.00 L-16.51 -29.00 L-16.48 -30.00 L-16.44 -31.00 L-16.41 -32.00 L-16.38 -33.00 L-16.34 -34.00 L-16.30 -35.00 L-16.26 -36.00 L-16.22 -37.00 L-16.18 -38.00 L-16.14 -39.00 L-16.09 -40.00 L-16.05 -41.00 L-16.00 -42.00 L-15.95 -43.00 L-15.90 -44.00 L-15.85 -45.00 L-15.79 -46.00 L-15.74 -47.00 L-15.68 -48.00 L-15.62 -49.00 L-15.56 -50.00 L-15.50 -51.00 L-15.44 -52.00 L-15.37 -53.00 L-15.31 -54.00 L-15.24 -55.00 L-15.17 -56.00 L-15.10 -57.00 L-15.03 -58.00 L-14.96 -59.00 L-14.88 -60.00 L-14.81 -61.00 L-14.73 -62.00 L-14.65 -63.00 L-14.57 -64.00 L-14.49 -65.00 L-14.41 -66.00 L-14.32 -67.00 L-14.24 -68.00 L-14.15 -69.00 L-14.06 -70.00 L-13.97 -71.00 L-13.88 -72.00 L-13.78 -73.00 L-13.69 -74.00 L-13.59 -75.00 L-13.49 -76.00 L-13.39 -77.00 L-13.29 -78.00 L-13.19 -79.00 L-13.09 -80.00 L-12.98 -81.00 L-12.87 -82.00 L-12.77 -83.00 L-12.66 -84.00 L-12.54 -85.00 L-12.43 -86.00 L-12.32 -87.00 L-12.20 -88.00 L-12.08 -89.00 L-11.97 -90.00 L-11.85 -91.00 L-11.72 -92.00 L-11.60 -93.00 L-11.48 -94.00 L-11.35 -95.00 L-11.22 -96.00 L-11.09 -97.00 L-10.96 -98.00 L-10.83 -99.00 L-10.70 -100.00 L-10.56 -101.00 L-10.43 -102.00 L-10.29 -103.00 L-10.15 -104.00 L-10.01 -105.00 L-9.87 -106.00 L-9.72 -107.00 L-9.58 -108.00 L-9.43 -109.00 L-9.28 -110.00 L-9.13 -111.00 L-8.98 -112.00 L-8.83 -113.00 L-8.68 -114.00 L-8.52 -115.00 L-8.36 -116.00 L-8.21 -117.00 L-8.05 -118.00 L-7.88 -119.00 L-7.72 -120.00 L-7.56 -121.00 L-7.39 -122.00 L-7.22 -123.00 L-7.06 -124.00 L-6.89 -125.00 L-6.71 -126.00 L-6.54 -127.00 L-6.37 -128.00 L-6.19 -129.00 L-6.01 -130.00 L-5.83 -131.00 L-5.65 -132.00 L-5.47 -133.00 L-5.29 -134.00 L-5.10 -135.00 L-4.92 -136.00 L-4.73 -137.00 L-4.54 -138.00 L-4.35 -139.00 L-4.16 -140.00 L-3.96 -141.00 L-3.77 -142.00 L-3.57 -143.00 L-3.37 -144.00 L-3.17 -145.00 L-2.97 -146.00 L-2.77 -147.00 L-2.56 -148.00 L-2.36 -149.00 L-2.15 -150.00 L-1.94 -151.00 L-1.73 -152.00 L-1.52 -153.00 L-1.31 -154.00 L-1.09 -155.00 L-0.88 -156.00 L-0.66 -157.00 L-0.44 -158.00 L-0.22 -159.00 L0.00 -160.00Z" fill="#000"/></g>
 <circle cx="1302.8" cy="528.5" r="4.8" fill="#777"/>
</svg>
<div class="t" style="left:570.4px;top:201px;font-size:14px;color:#6a6a6a;-webkit-text-stroke:0.45px #6a6a6a">Multiplicador</div>
<div class="t" style="left:570.6px;top:754.5px;font-size:13.7px;color:#6a6a6a;-webkit-text-stroke:0.45px #6a6a6a">Medida</div>
<svg style="left:570px;top:250px" width="15" height="16" viewBox="0 0 15 16">
 <path d="M1 0V15.5M14 0V15.5" stroke="#1a9ad6" stroke-width="1.1"/>
 <path d="M1 3H14M1 7.8H14M1 12.5H14" stroke="#1a9ad6" stroke-width="0.6" opacity="0.55"/>
 <g fill="#1a9ad6"><circle cx="3.7" cy="3" r="1.3"/><circle cx="6.3" cy="3" r="1.3"/><circle cx="8.9" cy="3" r="1.3"/>
 <circle cx="5.7" cy="7.8" r="1.3"/><circle cx="8.3" cy="7.8" r="1.3"/><circle cx="10.9" cy="7.8" r="1.3"/>
 <circle cx="3.7" cy="12.5" r="1.3"/><circle cx="6.3" cy="12.5" r="1.3"/><circle cx="8.9" cy="12.5" r="1.3"/></g>
</svg>
<div class="t" style="left:588.5px;top:249.8px">Costo</div>
<svg style="left:818px;top:252px" width="17" height="13" viewBox="0 0 17 13">
 <path d="M2.2 12.3A7 7 0 1 1 14.8 12.3" fill="none" stroke="#1a9ad6" stroke-width="1.6"/>
 <path d="M6.8 10.5L11.2 5.2L9 11.5Z" fill="#0b5d80"/><circle cx="7.9" cy="11" r="1.2" fill="#0b5d80"/>
</svg>
<svg style="left:1714px;top:200px" width="18" height="18" viewBox="0 0 18 18"><path d="M10.29 3.40 L11.59 3.68 L11.59 5.92 L10.29 6.20 L10.23 6.30 L10.64 7.56 L8.70 8.69 L7.81 7.70 L7.69 7.70 L6.80 8.69 L4.86 7.56 L5.27 6.30 L5.21 6.20 L3.91 5.92 L3.91 3.68 L5.21 3.40 L5.27 3.30 L4.86 2.04 L6.80 0.91 L7.69 1.90 L7.81 1.90 L8.70 0.91 L10.64 2.04 L10.23 3.30Z M9.05 4.80 A1.3 1.3 0 1 0 6.45 4.80 A1.3 1.3 0 1 0 9.05 4.80Z" fill="#666" fill-rule="evenodd"/><path d="M7.88 10.66 L9.31 11.01 L9.31 13.59 L7.88 13.94 L7.81 14.06 L8.23 15.48 L5.99 16.77 L4.97 15.70 L4.83 15.70 L3.81 16.77 L1.57 15.48 L1.99 14.06 L1.92 13.94 L0.49 13.59 L0.49 11.01 L1.92 10.66 L1.99 10.54 L1.57 9.12 L3.81 7.83 L4.83 8.90 L4.97 8.90 L5.99 7.83 L8.23 9.12 L7.81 10.54Z M6.50 12.30 A1.6 1.6 0 1 0 3.30 12.30 A1.6 1.6 0 1 0 6.50 12.30Z" fill="#666" fill-rule="evenodd"/><path d="M14.68 8.95 L15.85 9.19 L15.85 11.21 L14.68 11.45 L14.62 11.55 L15.00 12.69 L13.25 13.70 L12.45 12.80 L12.35 12.80 L11.55 13.70 L9.80 12.69 L10.18 11.55 L10.12 11.45 L8.95 11.21 L8.95 9.19 L10.12 8.95 L10.18 8.85 L9.80 7.71 L11.55 6.70 L12.35 7.60 L12.45 7.60 L13.25 6.70 L15.00 7.71 L14.62 8.85Z M13.50 10.20 A1.1 1.1 0 1 0 11.30 10.20 A1.1 1.1 0 1 0 13.50 10.20Z" fill="#666" fill-rule="evenodd"/></svg>

<!-- chart toolbar -->
<svg style="left:1485px;top:242px" width="18" height="18" viewBox="0 0 18 18">
 <path d="M8.86 0.73A7.3 7.3 0 0 0 5.85 14.32" fill="none" stroke="#666" stroke-width="2.2"/>
 <path d="M10.14 15.27A7.3 7.3 0 0 0 13.15 1.68" fill="none" stroke="#666" stroke-width="2.2"/>
 <path d="M1.6 15.6L6.9 11.3V15.6Z" fill="#666"/>
 <path d="M17.4 0.4L12.1 4.7V0.4Z" fill="#666"/>
</svg>
<svg style="left:1605px;top:243px" width="17" height="14" viewBox="0 0 17 14">
 <rect x="1" y="0.8" width="15.4" height="12.5" fill="none" stroke="#666" stroke-width="1.3"/>
 <path d="M7.5 4.3H12.6V9.3Z" fill="#666"/>
</svg>
<svg style="left:1637px;top:240px" width="18" height="20" viewBox="0 0 18 20">
 <path d="M0.5 2.5Q0.5 0.3 8.7 0.3Q17 0.3 17 2.5L11.3 10.8L10.8 15.2L7.5 19L7.4 10.8Z" fill="#6a6a6a"/>
 <ellipse cx="8.7" cy="2.4" rx="6.8" ry="1.3" fill="#a0a0a0"/>
</svg>
<svg style="left:1671px;top:242px" width="18" height="16" viewBox="0 0 18 16">
 <g fill="#cfcfcf"><rect x="0.5" y="9" width="4" height="6.5" rx="2"/><rect x="6.5" y="6" width="4" height="9.5" rx="2"/><rect x="12.5" y="0.5" width="4" height="15" rx="2"/></g>
</svg>
<svg style="left:1699px;top:248px" width="8" height="5" viewBox="0 0 8 5"><path d="M0 0H7L3.5 4.8Z" fill="#666"/></svg>
<svg style="left:1723px;top:240px" width="6" height="19" viewBox="0 0 6 19">
 <g fill="#666"><circle cx="2.6" cy="3.2" r="2.5"/><circle cx="2.6" cy="9.7" r="2.5"/><circle cx="2.6" cy="16.1" r="2.5"/></g>
</svg>

<!-- footer buttons -->
<div class="a" style="left:1482px;top:790px;width:74px;height:32px;border:1px solid #1a9ad6;border-radius:5px"></div>
<div class="t" style="left:1482px;width:74px;text-align:center;top:800.2px;color:#1a9ad6">Aplicar</div>
<div class="a" style="left:1561px;top:790px;width:90px;height:32px;background:#129fd8;border-radius:5px"></div>
<div class="t" style="left:1561px;width:90px;text-align:center;top:800.2px;color:#fff">Aceptar</div>
<div class="a" style="left:1656px;top:790px;width:90px;height:32px;border:1px solid #1a9ad6;border-radius:5px"></div>
<div class="t" style="left:1656px;width:90px;text-align:center;top:800.2px;color:#1a9ad6">Cancelar</div>


<!-- dropdown -->
<div class="a" style="left:1502px;top:114px;width:109px;height:241px;background:#f8f8f8;border:1px solid #9fb3cf;border-radius:5px;box-shadow:0 1px 3px rgba(0,0,0,0.12)"></div>
<div class="a" style="left:1503px;top:195px;width:107px;height:40px;background:#cdd9ec"></div>
<svg style="left:1531px;top:119px" width="32" height="32" viewBox="-16 -16 32 32"><circle r="15.6" fill="#e9e9e9"/><path d="M0 0L0.00 -15.60A15.6 15.6 0 0 1 11.22 10.84Z" fill="#9acd32"/><path d="M0 0L-15.60 -0.00A15.6 15.6 0 0 1 0.14 -15.60Z" fill="#f2d61c"/><path d="M0 0L-11.22 10.84A15.6 15.6 0 0 1 -15.60 -0.14Z" fill="#e8412a"/><circle cx="0" cy="5" r="7.6" fill="#5fc3da"/><path d="M0 4.2L-6 -9" stroke="#111" stroke-width="1.6"/></svg>
<svg style="left:1531px;top:159px" width="32" height="32" viewBox="-16 -16 32 32"><circle r="15.5" fill="#e9e9e9" stroke="#555" stroke-width="1"/><circle r="14.2" fill="none" stroke="#d0d0d0" stroke-width="0.8"/><path d="M-7.34 9.74A12.2 12.2 0 0 1 -12.11 1.49" fill="none" stroke="#e8412a" stroke-width="3"/><path d="M-12.08 1.70A12.2 12.2 0 0 1 0.11 -12.20" fill="none" stroke="#f2d61c" stroke-width="3"/><path d="M0.00 -12.20A12.2 12.2 0 0 1 8.16 9.07" fill="none" stroke="#9acd32" stroke-width="3"/><path d="M0 0L-5.82 -10.50" stroke="#111" stroke-width="1.5"/></svg>
<svg style="left:1531px;top:199px" width="32" height="32" viewBox="-16 -16 32 32"><circle r="15.4" fill="#e9e9e9" stroke="#c2c2c2" stroke-width="1"/><path d="M-7.34 9.74A12.2 12.2 0 0 1 -12.11 1.49" fill="none" stroke="#e8412a" stroke-width="3"/><path d="M-12.08 1.70A12.2 12.2 0 0 1 0.11 -12.20" fill="none" stroke="#f2d61c" stroke-width="3"/><path d="M0.00 -12.20A12.2 12.2 0 0 1 8.16 9.07" fill="none" stroke="#9acd32" stroke-width="3"/><path d="M0 0L-5.82 -10.50" stroke="#111" stroke-width="1.5"/></svg>
<svg style="left:1531px;top:239px" width="32" height="32" viewBox="-16 -16 32 32"><circle r="15.6" fill="#e6e6e6"/><path d="M-6.14 8.15A10.2 10.2 0 0 1 -10.12 1.24" fill="none" stroke="#e8412a" stroke-width="2.7"/><path d="M-10.10 1.42A10.2 10.2 0 0 1 0.09 -10.20" fill="none" stroke="#f2d61c" stroke-width="2.7"/><path d="M0.00 -10.20A10.2 10.2 0 0 1 6.83 7.58" fill="none" stroke="#9acd32" stroke-width="2.7"/><path d="M0 0L-4.46 -8.39" stroke="#111" stroke-width="1.3"/></svg>
<svg style="left:1531px;top:286px" width="32" height="32" viewBox="-16 -16 32 32"><path d="M-15 0A15 15 0 0 1 15 0Z" fill="#e8e8e8"/><path d="M-12.80 -0.00A12.8 12.8 0 0 1 -12.68 -1.78" fill="none" stroke="#e8412a" stroke-width="3"/><path d="M-12.68 -1.78A12.8 12.8 0 0 1 0.11 -12.80" fill="none" stroke="#f2d61c" stroke-width="3"/><path d="M0.00 -12.80A12.8 12.8 0 0 1 12.80 -0.00" fill="none" stroke="#9acd32" stroke-width="3"/><path d="M0 0.5L-5.7 -11.5" stroke="#111" stroke-width="1.4"/></svg>
<svg style="left:1531px;top:319px" width="32" height="32" viewBox="-16 -16 32 32"><circle r="15.6" fill="#454545"/><path d="M-7.40 9.82A12.3 12.3 0 0 1 -12.21 1.50" fill="none" stroke="#e8412a" stroke-width="3.2"/><path d="M-12.18 1.71A12.3 12.3 0 0 1 0.11 -12.30" fill="none" stroke="#f2d61c" stroke-width="3.2"/><path d="M0.00 -12.30A12.3 12.3 0 0 1 8.23 9.14" fill="none" stroke="#9acd32" stroke-width="3.2"/><rect x="-5.6" y="7.4" width="11.2" height="6" rx="1.5" fill="#fff"/><path d="M0.8 0V-12.5" stroke="#000" stroke-width="1.5"/></svg>
<svg style="left:1516px;top:211px" width="9" height="8" viewBox="0 0 9 8"><path d="M0.8 4L3.3 6.5L8 1" fill="none" stroke="#111" stroke-width="1.8"/></svg>
<div class="t" style="left:1565px;top:129.4px;color:#444">#&nbsp;1</div>
<div class="t" style="left:1565px;top:169.4px;color:#444">#2</div>
<div class="t" style="left:1565px;top:209.4px;color:#222">#&nbsp;3</div>
<div class="t" style="left:1565px;top:249.4px;color:#444">#&nbsp;4</div>
<div class="t" style="left:1565px;top:289.4px;color:#444">#&nbsp;5</div>
<div class="t" style="left:1565px;top:329.4px;color:#444">#&nbsp;6</div>

</body></html>
